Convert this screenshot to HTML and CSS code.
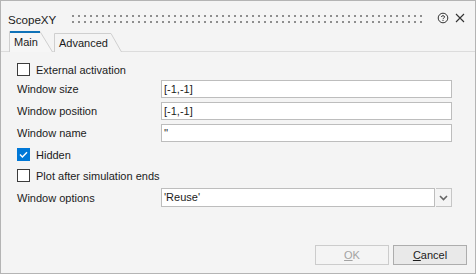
FILE: index.html
```html
<!DOCTYPE html>
<html>
<head>
    <title>ScopeXY</title>
    <meta charset="utf-8" />
    <link rel="stylesheet" href="styles.css">
</head>
<body>
    <div class="dialog">
        <div class="titlebar">
            <span class="title">ScopeXY</span>
            <span class="grip"></span>
            <svg class="help" width="12" height="12" viewBox="0 0 12 12">
                <circle cx="6" cy="6" r="4.8" fill="none" stroke="#333" stroke-width="1"/>
                <path d="M4.4 4.9 C4.4 3.3 7.6 3.3 7.6 4.9 C7.6 6 6 6 6 7.2" fill="none" stroke="#333" stroke-width="1"/>
                <rect x="5.5" y="8" width="1" height="1" fill="#333"/>
            </svg>
            <svg class="close" width="10" height="10" viewBox="0 0 10 10">
                <path d="M1 1 L9 9 M9 1 L1 9" stroke="#333" stroke-width="1.1"/>
            </svg>
        </div>

        <div class="tabs">
            <div class="tab tab-main">
                <svg class="tab-shape" width="44" height="21" viewBox="0 0 44 21">
                    <path d="M0.5 21 V0.5 H31 L43.5 21" fill="#f6f6f6" stroke="#cfcfcf"/>
                    <rect x="1" y="0" width="30" height="2" fill="#0f72b8"/>
                </svg>
                <span class="tab-text">Main</span>
            </div>
            <div class="tab tab-adv">
                <svg class="tab-shape" width="68" height="19" viewBox="0 0 68 19">
                    <path d="M0.5 19 V0.5 H57 L67.5 19" fill="#f4f4f4" stroke="#cfcfcf"/>
                </svg>
                <span class="tab-text">Advanced</span>
            </div>
        </div>

        <div class="page">
            <div class="check-row row-ext"><span class="box"></span>External activation</div>
            <div class="field row-first">
                <span class="field-label">Window size</span>
                <span class="text-box">[-1,-1]</span>
            </div>
            <div class="field">
                <span class="field-label">Window position</span>
                <span class="text-box">[-1,-1]</span>
            </div>
            <div class="field">
                <span class="field-label">Window name</span>
                <span class="text-box">''</span>
            </div>
            <div class="check-row row-hidden">
                <span class="box box-on">
                    <svg width="13" height="13" viewBox="0 0 13 13">
                        <path d="M3 6.6 L5.4 9 L10 4.2" fill="none" stroke="#fff" stroke-width="1.4"/>
                    </svg>
                </span>Hidden
            </div>
            <div class="check-row row-plot"><span class="box"></span>Plot after simulation ends</div>
            <div class="field row-options">
                <span class="field-label">Window options</span>
                <span class="combo">
                    <span class="combo-value">'Reuse'</span>
                    <span class="combo-btn">
                        <svg width="9" height="6" viewBox="0 0 9 6">
                            <path d="M1 1 L4.5 4.5 L8 1" fill="none" stroke="#666" stroke-width="1.6"/>
                        </svg>
                    </span>
                </span>
            </div>
        </div>

        <div class="buttons">
            <span class="btn btn-disabled"><u>O</u>K</span>
            <span class="btn"><u>C</u>ancel</span>
        </div>
    </div>
</body>
</html>
```

FILE: styles.css
```css
body {
    margin: 0;
    font-family: "Liberation Sans", Arial, sans-serif;
    font-size: 11px;
    color: #1b1b1b;
}

.dialog {
    width: 476px;
    height: 274px;
    box-sizing: border-box;
    border: 1px solid #b4b4b4;
    background-color: #f4f4f4;
    display: flex;
    flex-direction: column;
}

/* title bar */
.titlebar {
    height: 30px;
    display: flex;
    align-items: center;
    padding: 0 10px 0 7px;
}

.title {
    font-size: 11.6px;
    color: #1a1a1a;
    margin-top: 6px;
}

.grip {
    flex: 1;
    height: 8px;
    margin: 5px 12px 0 16px;
    background-image:
        linear-gradient(90deg, #8e8e8e 2px, transparent 2px),
        linear-gradient(90deg, #8e8e8e 2px, transparent 2px);
    background-size: 6px 2px, 6px 2px;
    background-position: 0 0, 0 6px;
    background-repeat: repeat-x;
}

.help {
    margin-top: 4px;
}

.close {
    margin: 4px 0 0 6px;
}

/* tabs */
.tabs {
    height: 20px;
    display: flex;
    align-items: flex-end;
    padding-left: 8px;
    border-bottom: 1px solid #dcdcdc;
}

.tab {
    position: relative;
    display: flex;
    align-items: center;
}

.tab-shape {
    position: absolute;
    left: 0;
    top: 0;
}

.tab-text {
    position: relative;
}

.tab-main {
    width: 44px;
    height: 20px;
    margin-right: 1px;
}

.tab-main .tab-text {
    padding: 2px 0 0 5px;
}

.tab-adv {
    width: 68px;
    height: 18px;
}

.tab-adv .tab-text {
    padding: 1px 0 0 5px;
}

/* page content */
.page {
    padding: 8px 0 0 15px;
    display: flex;
    flex-direction: column;
}

.check-row {
    height: 19px;
    display: flex;
    align-items: center;
    padding-left: 1px;
}

.box {
    width: 13px;
    height: 13px;
    box-sizing: border-box;
    border: 1px solid #3c3c3c;
    background-color: #fff;
    margin-right: 6px;
}

.box-on {
    border-color: #0078d7;
    background-color: #0078d7;
}

.box-on svg {
    display: block;
    margin: -1px 0 0 -1px;
}

.field {
    height: 18px;
    display: flex;
    align-items: center;
    margin-top: 4px;
    padding-left: 1px;
}

.row-first {
    margin-top: 1px;
}

.row-hidden {
    margin-top: 3px;
}

.row-plot {
    margin-top: 2px;
}

.row-options {
    height: 19px;
    margin-top: 3px;
}

.field-label {
    width: 144px;
}

.text-box {
    width: 291px;
    height: 18px;
    box-sizing: border-box;
    border: 1px solid #bdbdbd;
    background-color: #fff;
    padding: 2px 0 0 2px;
}

.combo {
    width: 291px;
    height: 19px;
    display: flex;
}

.combo-value {
    flex: 1;
    border: 1px solid #bdbdbd;
    background-color: #fff;
    padding: 2px 0 0 2px;
}

.combo-btn {
    width: 15px;
    border: 1px solid #c6c6c6;
    border-left: none;
    margin-left: 1px;
    display: flex;
    align-items: center;
    justify-content: center;
}

/* dialog buttons */
.buttons {
    margin-top: auto;
    display: flex;
    justify-content: flex-end;
    gap: 4px;
    padding: 0 8px 8px 0;
}

.btn {
    width: 74px;
    height: 20px;
    box-sizing: border-box;
    border: 1px solid #adadad;
    background-color: #e9e9e9;
    display: flex;
    align-items: center;
    justify-content: center;
}

.btn-disabled {
    border-color: #cccccc;
    background-color: #f4f4f4;
    color: #a3a3a3;
}
```
